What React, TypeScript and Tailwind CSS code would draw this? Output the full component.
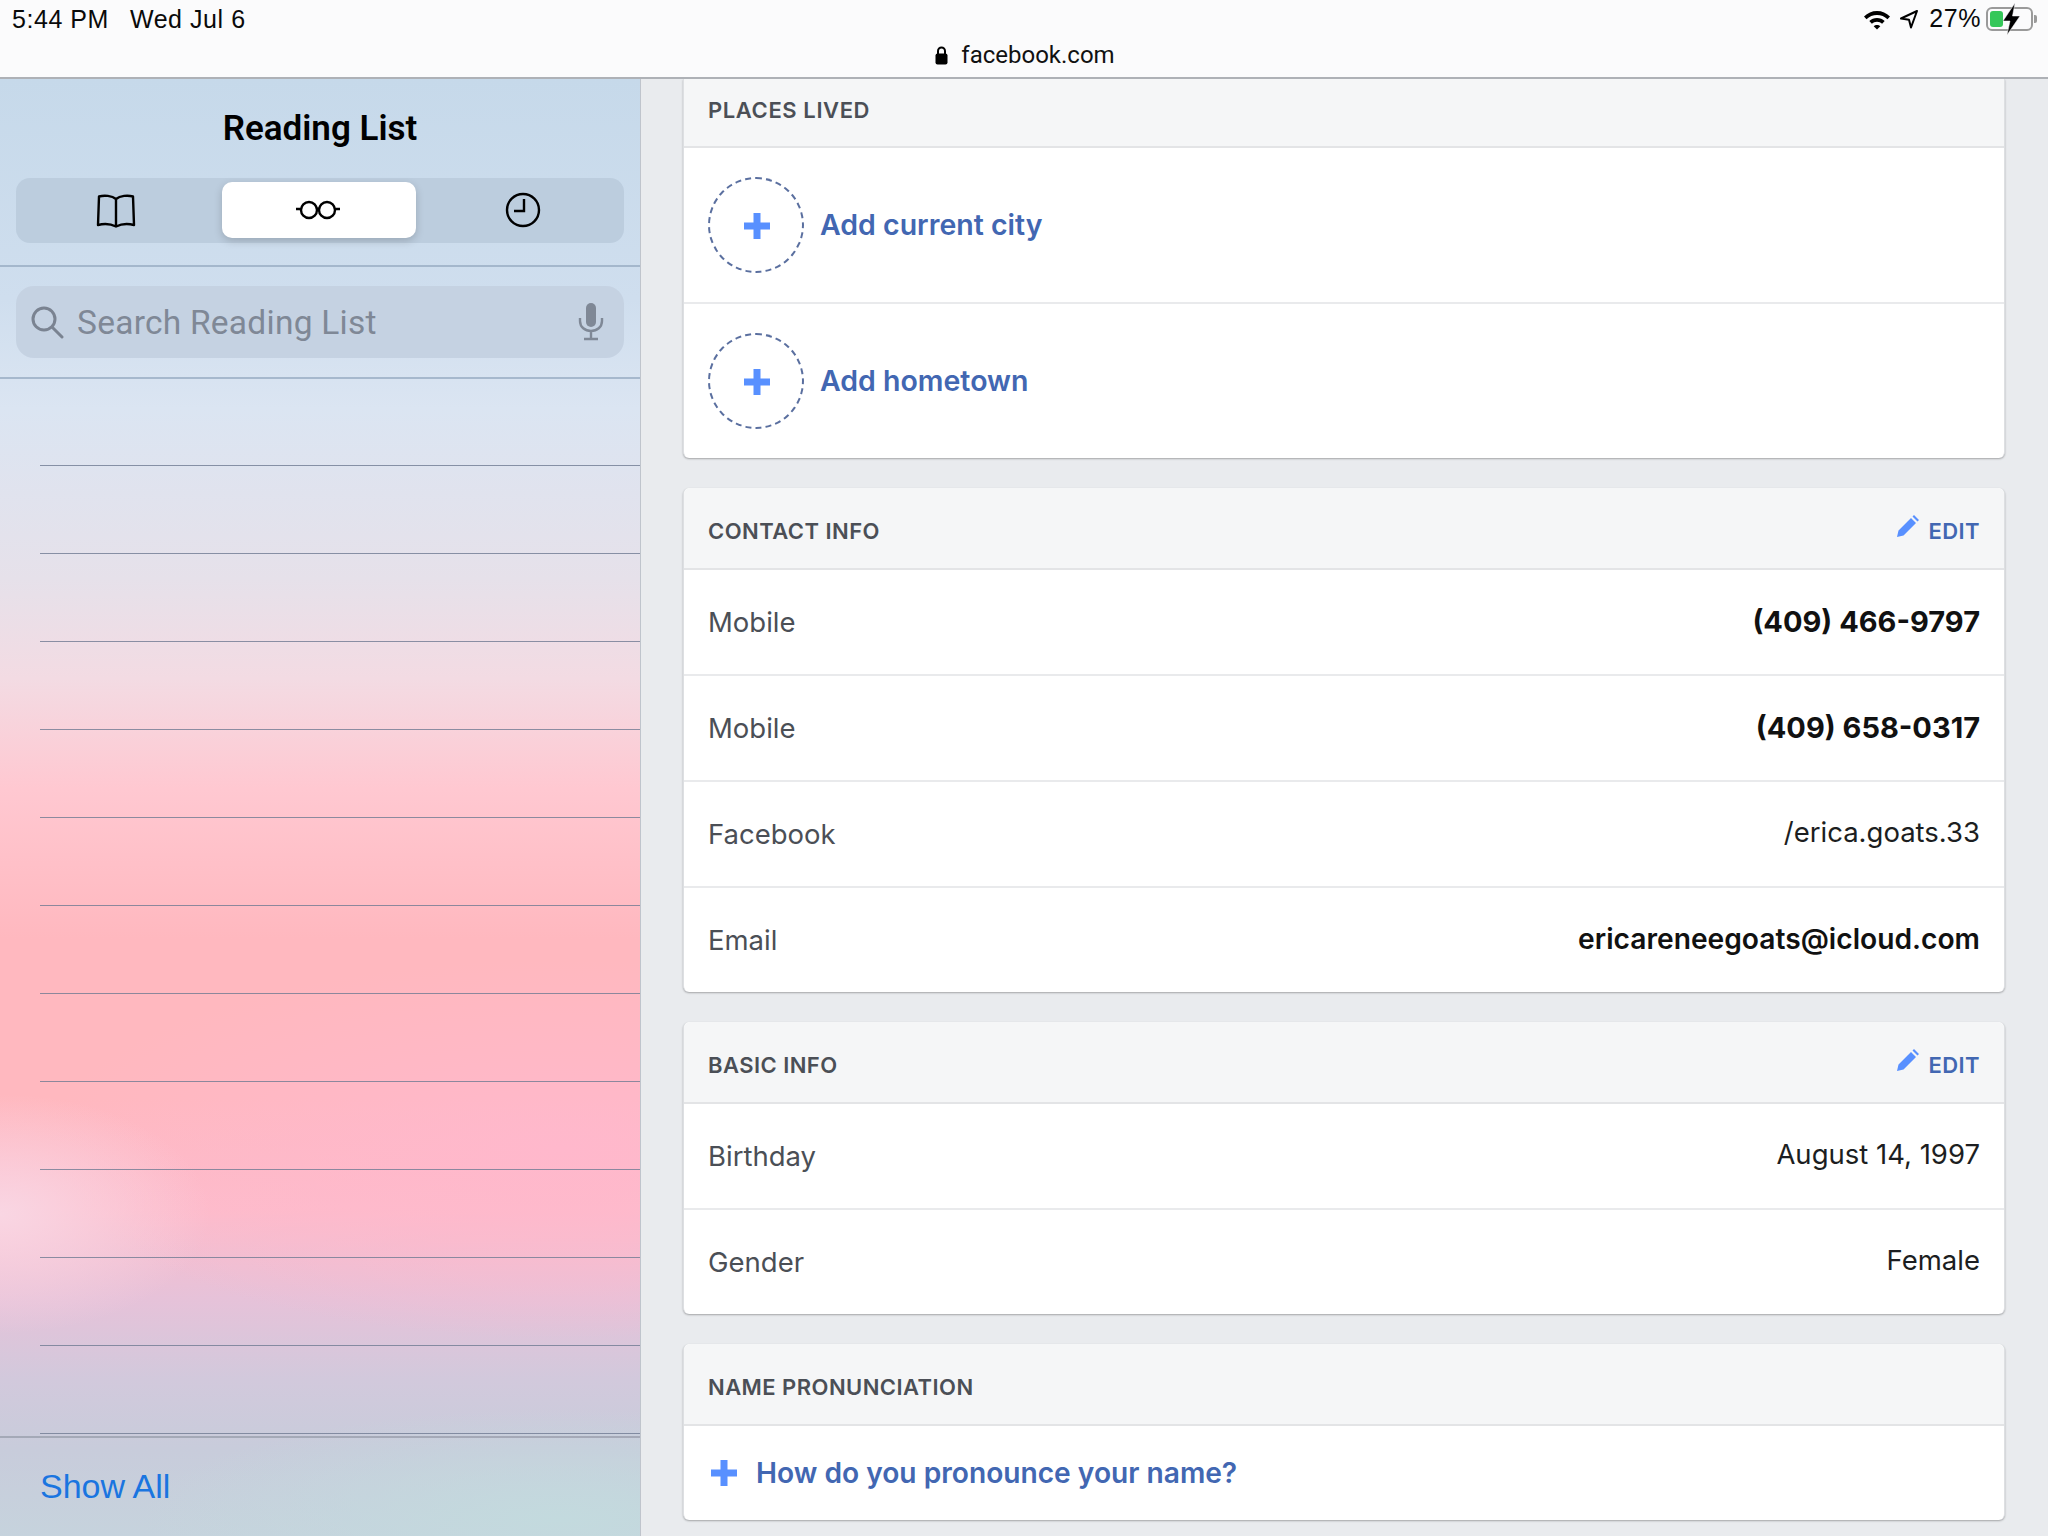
import React from "react";

const Plus = ({ s = 26 }: { s?: number }) => (
  <svg width={s} height={s} viewBox="0 0 26 26" className="shrink-0">
    <path d="M9.500 0h7v9.500H26v7h-9.500V26h-7v-9.500H0v-7h9.500z" fill="#5890ff" />
  </svg>
);

const Pencil = () => (
  <svg width="22" height="22" viewBox="0 0 22 22" className="shrink-0">
    <path d="M0 22l1.500-6.500L14 3l5 5L6.500 20.500z M15.500 1.500L17 0l5 5-1.500 1.500z" fill="#5890ff" />
  </svg>
);

const Dashed = () => (
  <div className="w-[96px] h-[96px] rounded-full border-[2px] border-dashed border-[#5a6f9f] flex items-center justify-center shrink-0 pl-[2px] pt-[1px]">
    <Plus />
  </div>
);

const CardHead = ({ title, edit }: { title: string; edit?: boolean }) => (
  <div className="h-[82px] bg-[#f5f6f7] border-b-2 border-[#e3e4e6] flex items-center justify-between px-[24px] pt-[7px] rounded-t-[6px]">
    <span className="text-[22px] font-semibold tracking-[0.45px] text-[#4b4f56]">{title}</span>
    {edit && (
      <span className="flex items-center gap-[10px] text-[22px] font-semibold tracking-[0.4px] text-[#4267b2]">
        <span className="-mt-[12px]"><Pencil /></span>
        EDIT
      </span>
    )}
  </div>
);

const Row = ({ label, value, weight, last }: { label: string; value: string; weight?: "phone" | "email"; last?: boolean }) => (
  <div className={`flex items-center justify-between px-[24px] ${last ? "h-[104px]" : "h-[106px] border-b-2 border-[#e9eaec]"}`}>
    <span className="text-[27.500px] text-[#4b4f56] mt-[2px]">{label}</span>
    <span
      className={
        weight === "phone"
          ? "text-[29px] font-bold text-[#111]"
          : weight === "email"
            ? "text-[28.200px] font-semibold text-[#111] -mt-[2px]"
            : "text-[27.500px] text-[#1c1e21] -mt-[2px]"
      }
    >
      {value}
    </span>
  </div>
);

const Card = ({ children, top }: { children: React.ReactNode; top?: boolean }) => (
  <section className={`bg-white shadow-[0_1px_2px_rgba(0,0,0,0.3)] border-x border-[#dddfe2] ${top ? "rounded-b-[6px]" : "rounded-[6px]"}`}>
    {children}
  </section>
);

const AddRow = ({ label, last }: { label: string; last?: boolean }) => (
  <div className={`flex items-center gap-[16px] px-[24px] ${last ? "h-[154px]" : "h-[156px] border-b-2 border-[#e9eaec]"}`}>
    <Dashed />
    <span className="text-[28.500px] font-semibold text-[#4267b2]">{label}</span>
  </div>
);

export default function App() {
  return (
    <div className="w-[2048px] h-[1536px] flex flex-col overflow-hidden bg-[#e9ebee] font-['Inter','Liberation_Sans',sans-serif]">
      <header className="h-[79px] shrink-0 bg-[#fbfbfc] border-b-2 border-[#aeb1b6] flex flex-col relative">
        <div className="flex justify-between items-center h-[40px] pl-[12px] pr-[15px] text-[#0a0a0a] text-[25px]">
          <span className="flex gap-[21px] font-['Liberation_Sans',sans-serif] tracking-[0.55px]">
            <span>5:44 PM</span>
            <span>Wed Jul 6</span>
          </span>
          <span className="flex items-center font-['Liberation_Sans',sans-serif] -mt-[2px]">
            <svg width="28" height="22" viewBox="0 0 28 22" className="mr-[8px]">
              <path d="M14 3C9 3 4.500 5 1 8.500l2.500 2.700C6.300 8.500 10 7 14 7s7.700 1.500 10.500 4.200L27 8.500C23.500 5 19 3 14 3z" />
              <path d="M14 10c-3 0-5.600 1.100-7.700 3.100l2.600 2.700C10.200 14.500 12 13.800 14 13.800s3.800.7 5.100 2l2.600-2.700C19.600 11.100 17 10 14 10z" />
              <path d="M14 17c-1.300 0-2.500.5-3.300 1.300L14 21.500l3.300-3.200C16.500 17.500 15.300 17 14 17z" />
            </svg>
            <svg width="20" height="20" viewBox="0 0 20 20" className="mr-[10px]" fill="none" stroke="#000" strokeWidth="2" strokeLinejoin="round">
              <path d="M18 2L2 9.500l8 1.200L12 18.500z" />
            </svg>
            <span className="mr-[5px] tracking-[0.6px]">27%</span>
            <span className="relative w-[47px] h-[24px] rounded-[6px] border-2 border-[#9a9a9a] flex items-center p-[2px]">
              <span className="w-[13px] h-[16px] bg-[#34c759] rounded-[3px]" />
              <svg width="20" height="32" viewBox="0 0 20 32" className="absolute left-[14px] -top-[6px]">
                <path d="M13 0L1 18h7l-3 14L18 13h-7.500z" fill="#000" stroke="#fbfbfc" strokeWidth="0.5" />
              </svg>
              <span className="absolute -right-[6px] top-[6px] w-[3px] h-[8px] bg-[#9a9a9a] rounded-r-[2px]" />
            </span>
          </span>
        </div>
        <div className="flex-1 flex items-center justify-center gap-[13px] text-[24px] text-[#111] font-['Roboto',sans-serif] -mt-[7px] pl-[2px]">
          <svg width="13" height="19" viewBox="0 0 13 19">
            <path d="M3 8V5a3.500 3.500 0 0 1 7 0v3" fill="none" stroke="#000" strokeWidth="2" />
            <rect x="0.500" y="7.500" width="12" height="11" rx="2" fill="#000" />
          </svg>
          <span>facebook.com</span>
        </div>
      </header>

      <div className="flex-1 flex min-h-0">
        <aside className="w-[641px] shrink-0 border-r border-[#bfc4cc] flex flex-col bg-[radial-gradient(ellipse_420px_110px_at_560px_1440px,#c3dade_0%,rgba(195,218,222,0)_100%),radial-gradient(ellipse_210px_120px_at_0px_1135px,#f9d6e3_0%,rgba(249,214,227,0)_100%),radial-gradient(ellipse_520px_190px_at_560px_1070px,#ffb8cc_0%,rgba(255,184,204,0)_100%),linear-gradient(180deg,#c6d9ea_0px,#cfdeee_220px,#dbe5f2_330px,#e6e1ea_500px,#f3dbe3_600px,#ffc8d1_710px,#ffb8bf_860px,#ffb8bf_1020px,#fdbccb_1130px,#e6c2d9_1220px,#d2c9dc_1300px,#c8ccdb_1370px,#c6d3dd_1458px)]">
          <div className="h-[188px] shrink-0 border-b-2 border-[#a4b7cc] px-[16px] flex flex-col">
            <h1 className="h-[99px] pt-[2px] flex items-center justify-center text-[35px] font-semibold text-black font-['Roboto',sans-serif]">Reading List</h1>
            <div className="h-[65px] rounded-[14px] bg-[#bccdde] grid grid-cols-3 relative items-center">
              <div className="flex justify-center -ml-[2px]">
                <svg width="40" height="34" viewBox="0 0 40 34" fill="none" stroke="#000" strokeWidth="2.400" strokeLinejoin="round">
                  <path d="M20 5C16 1.500 8 1 3 2.500L2 31c6-1.500 13-1 18 1.500 5-2.500 12-3 18-1.500L37 2.500C32 1 24 1.500 20 5zM20 5v27" />
                </svg>
              </div>
              <div className="flex justify-center -mt-[2px]">
                <div className="w-[194px] h-[56px] rounded-[10px] bg-white shadow-[0_3px_8px_rgba(0,0,0,0.18)] flex items-center justify-center -ml-[2px] pr-[2px]">
                  <svg width="46" height="24" viewBox="0 0 46 24" fill="none" stroke="#000" strokeWidth="2.400">
                    <circle cx="14" cy="12" r="8" />
                    <circle cx="32" cy="12" r="8" />
                    <path d="M22 11c1-.8 1-.8 2 0M6 11H1M40 11h5" />
                  </svg>
                </div>
              </div>
              <div className="flex justify-center -mt-[1px]">
                <svg width="36" height="36" viewBox="0 0 36 36" fill="none" stroke="#000" strokeWidth="2.400">
                  <circle cx="18" cy="18" r="16" />
                  <path d="M19 7v12H9" />
                </svg>
              </div>
            </div>
          </div>
          <div className="h-[112px] shrink-0 border-b-2 border-[#a6b8cd] px-[16px] flex items-center">
            <div className="w-full h-[72px] rounded-[18px] bg-[#c5d2e2] flex items-center pl-[14px] pr-[20px]">
              <svg width="34" height="34" viewBox="0 0 34 34" fill="none" stroke="#7a8391" strokeWidth="3" className="shrink-0">
                <circle cx="14" cy="14" r="11" />
                <path d="M22 22l10 10" strokeLinecap="round" />
              </svg>
              <span className="ml-[13px] flex-1 text-[33.500px] text-[#7f8896] font-['Roboto',sans-serif] tracking-[0.25px] pt-[2px]">Search Reading List</span>
              <svg width="26" height="38" viewBox="0 0 26 38" className="shrink-0">
                <rect x="8" y="0" width="10" height="24" rx="5" fill="#7f8896" />
                <path d="M2 15v3c0 6 5 10 11 10s11-4 11-10v-3M13 28v7M6 36h14" fill="none" stroke="#7f8896" strokeWidth="2.400" />
              </svg>
            </div>
          </div>
          <div className="flex-1 pl-[40px] flex flex-col min-h-0">
            {Array.from({ length: 12 }).map((_, i) => (
              <div key={i} className={`${i === 0 ? "h-[87px]" : "h-[88px]"} shrink-0 border-b-[1.500px] border-[#6f7a92]/80`} />
            ))}
          </div>
          <div className="h-[100px] shrink-0 border-t-2 border-[#a4a9b7] px-[40px] flex items-center">
            <a className="text-[34px] text-[#1a75e0] font-['Liberation_Sans',sans-serif] -mt-[1px]">Show All</a>
          </div>
        </aside>

        <main className="flex-1 min-w-0 pl-[42px] pr-[43px] flex flex-col gap-[30px]">
          <Card top>
            <div className="h-[69px] bg-[#f5f6f7] border-b-2 border-[#e3e4e6] flex items-center px-[24px]">
              <span className="text-[22px] font-semibold tracking-[0.6px] text-[#4b4f56] -mt-[5px]">PLACES LIVED</span>
            </div>
            <AddRow label="Add current city" />
            <AddRow label="Add hometown" last />
          </Card>
          <Card>
            <CardHead title="CONTACT INFO" edit />
            <Row label="Mobile" value="(409) 466-9797" weight="phone" />
            <Row label="Mobile" value="(409) 658-0317" weight="phone" />
            <Row label="Facebook" value="/erica.goats.33" />
            <Row label="Email" value="ericareneegoats@icloud.com" weight="email" last />
          </Card>
          <Card>
            <CardHead title="BASIC INFO" edit />
            <Row label="Birthday" value="August 14, 1997" />
            <Row label="Gender" value="Female" last />
          </Card>
          <Card>
            <CardHead title="NAME PRONUNCIATION" />
            <div className="h-[94px] flex items-center gap-[16px] px-[27px]">
              <Plus s={26} />
              <span className="text-[28.150px] font-semibold text-[#4267b2] ml-[3px] pt-[1px]">How do you pronounce your name?</span>
            </div>
          </Card>
        </main>
      </div>
    </div>
  );
}
